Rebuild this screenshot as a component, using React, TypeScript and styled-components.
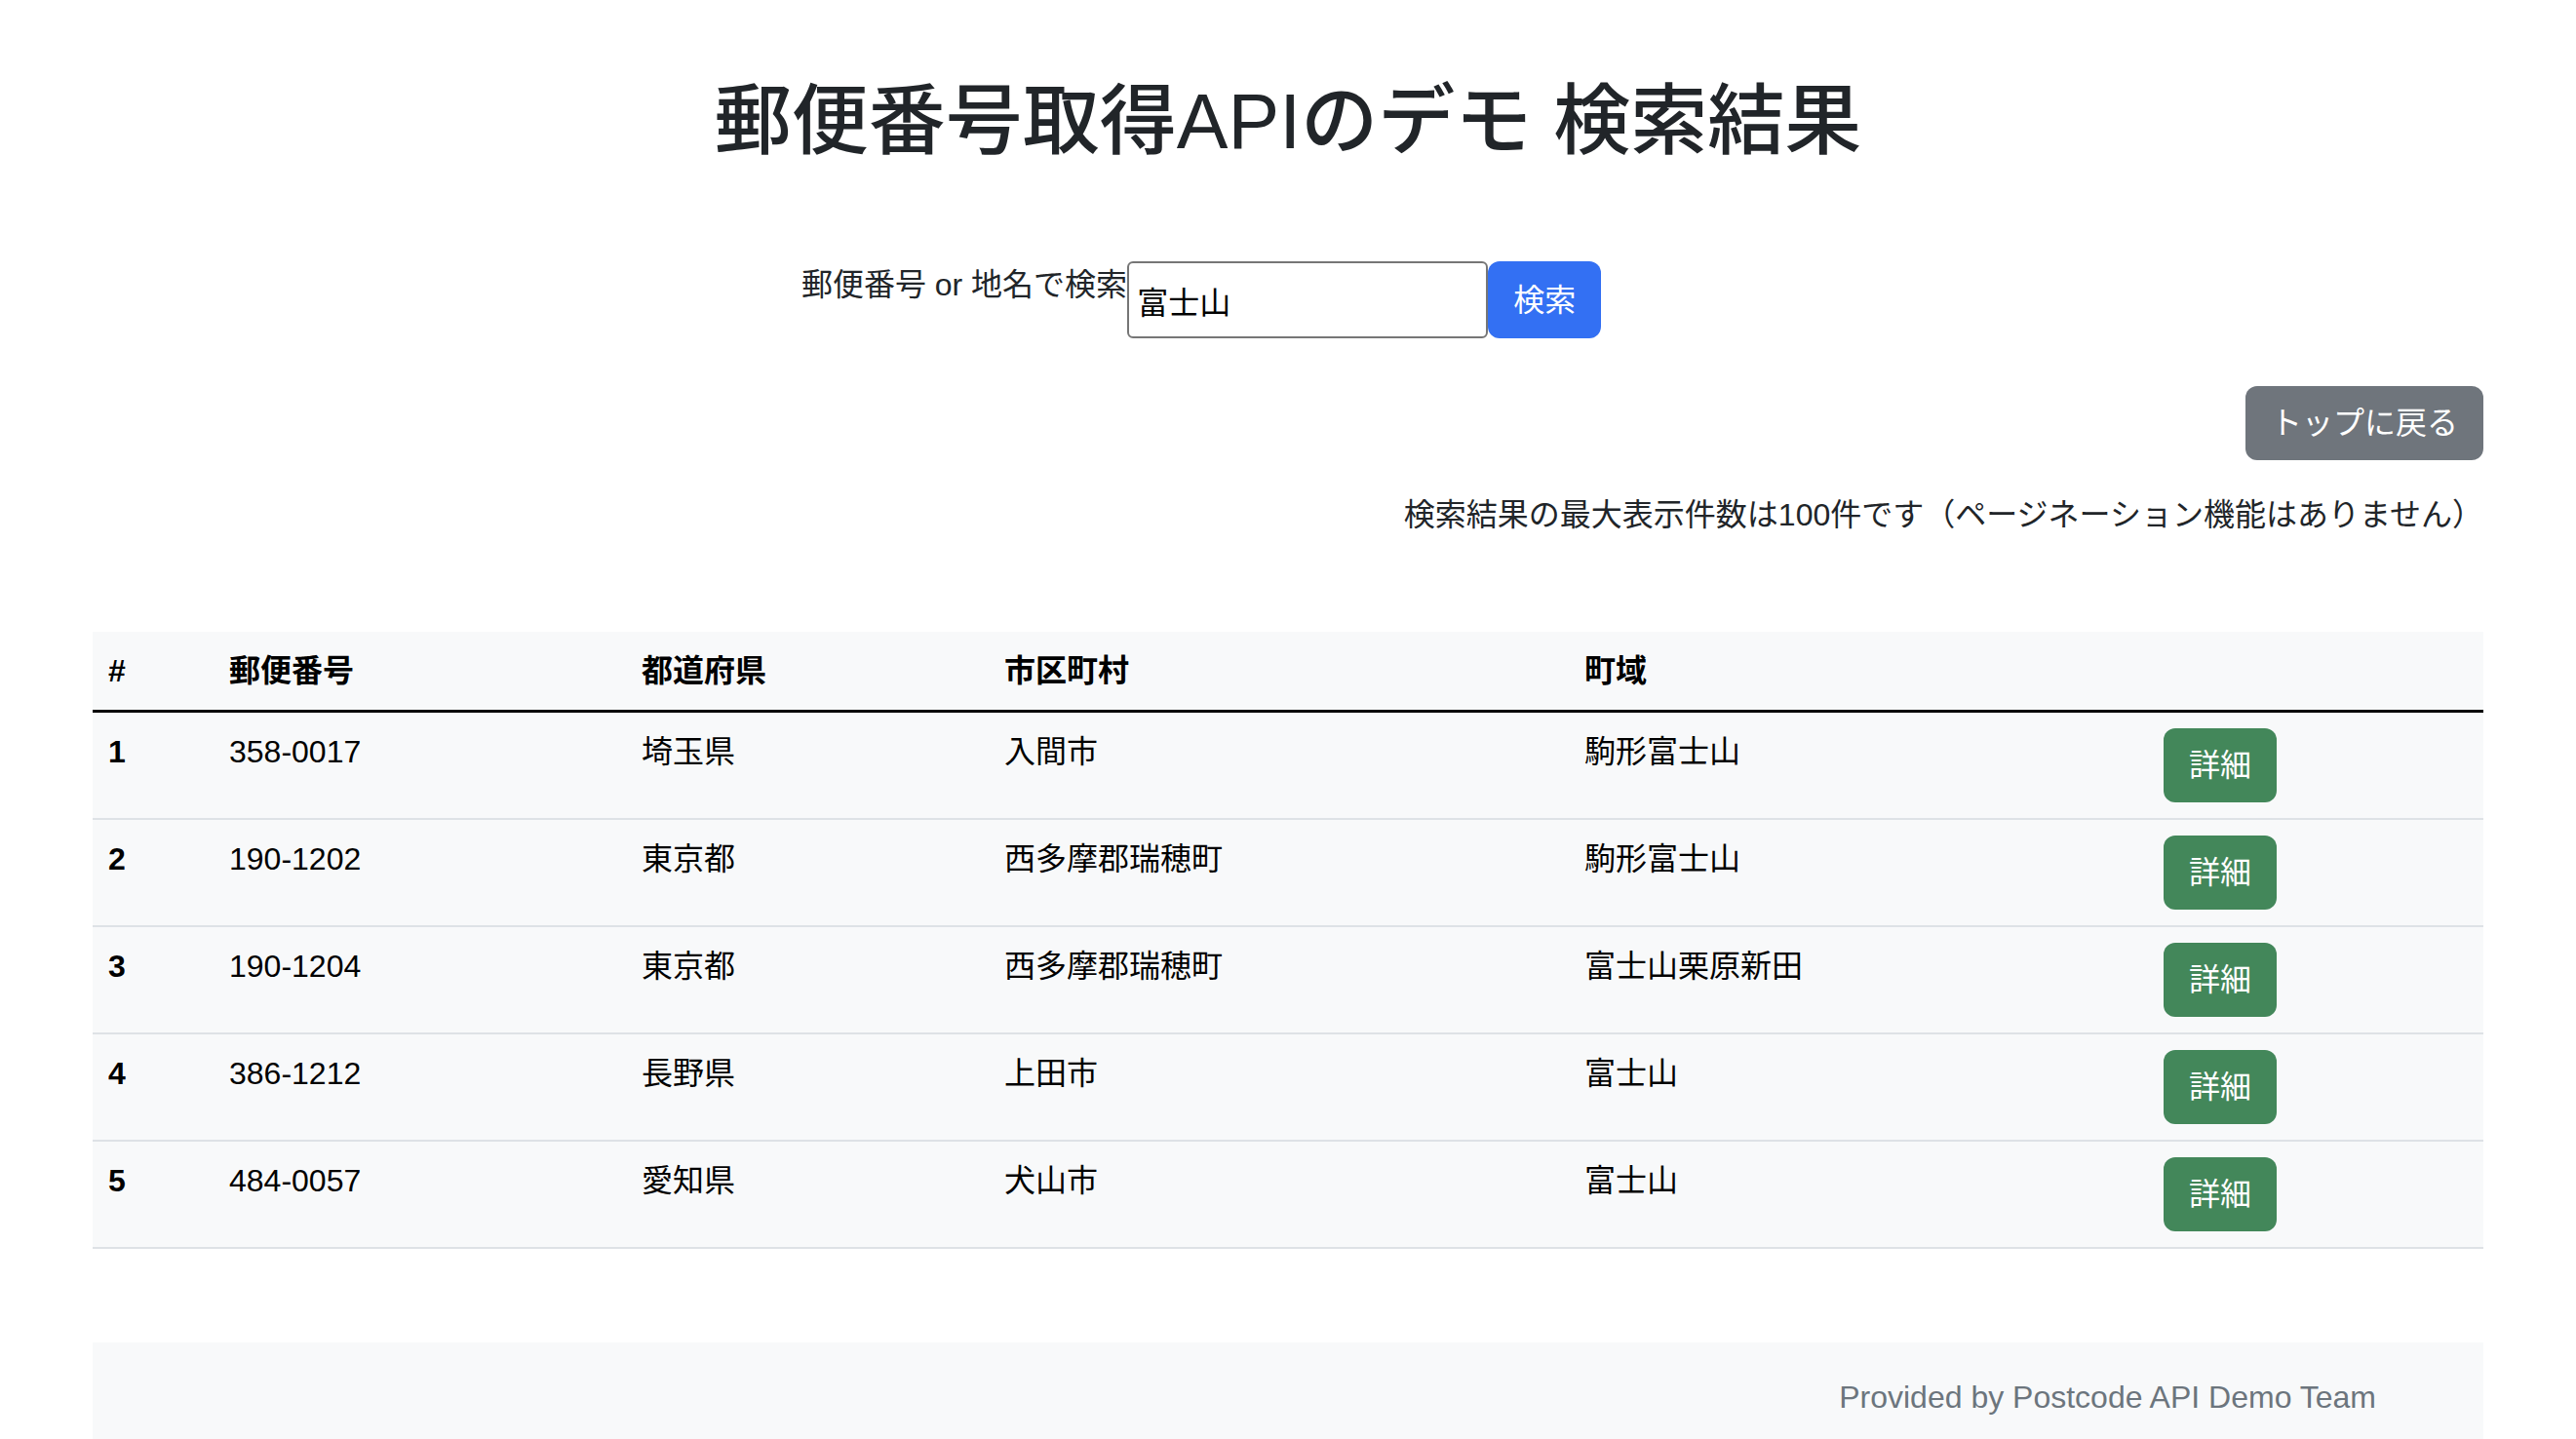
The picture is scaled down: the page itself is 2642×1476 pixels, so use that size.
import * as React from "react";
import styled, { createGlobalStyle } from "styled-components";

const GlobalStyle = createGlobalStyle`
  * { box-sizing: border-box; }
  body {
    margin: 0;
    background: #ffffff;
    color: #212529;
    font-family: "Liberation Sans", "Noto Sans CJK JP", sans-serif;
    font-size: 32px;
    line-height: 1.5;
  }
`;

const Page = styled.div`
  max-width: 2452px;
  margin: 0 auto;
  display: flex;
  flex-direction: column;
`;

const Title = styled.h1`
  margin: 77px 0 0;
  font-size: 79px;
  font-weight: 500;
  line-height: 96px;
  text-align: center;
  color: #212529;
`;

const SearchForm = styled.form`
  margin-top: 95px;
  display: flex;
  justify-content: center;
  padding-right: 178px;
`;

const SearchLabel = styled.label`
  line-height: 48px;
`;

const SearchInput = styled.input`
  width: 370px;
  height: 79px;
  border: 2px solid #767676;
  border-radius: 6px;
  padding: 0 8px;
  font: inherit;
  color: #000;
  background: #fff;
`;

const Button = styled.button<{ $tone: "primary" | "secondary" | "success" }>`
  display: inline-flex;
  align-items: center;
  justify-content: center;
  padding: 12px 24px;
  border: 2px solid transparent;
  border-radius: 12px;
  font: inherit;
  line-height: 48px;
  color: #fff;
  cursor: pointer;
  background: ${(p) =>
    p.$tone === "primary" ? "#3370f3" : p.$tone === "secondary" ? "#6f757c" : "#43875a"};
`;

const SearchButton = styled(Button)`
  padding: 0 24px;
  width: 116px;
`;

const TopRow = styled.div`
  margin-top: 49px;
  display: flex;
  justify-content: flex-end;
`;

const Notice = styled.p`
  margin: 32px 0 0;
  text-align: right;
  line-height: 48px;
`;

const Table = styled.table`
  margin-top: 96px;
  width: 100%;
  table-layout: fixed;
  border-collapse: collapse;
  background: #f8f9fa;
  color: #000;
`;

const HeadCell = styled.th`
  padding: 16px;
  text-align: left;
  font-weight: 700;
  line-height: 48px;
  vertical-align: top;
  border-bottom: 3px solid #000;
`;

const Row = styled.tr`
  border-bottom: 2px solid #dee2e6;
`;

const Cell = styled.td<{ $bold?: boolean }>`
  padding: 16px;
  line-height: 48px;
  vertical-align: top;
  font-weight: ${(p) => (p.$bold ? 700 : 400)};
`;

const Footer = styled.footer`
  margin-top: 96px;
  height: 200px;
  background: #f8f9fa;
  padding: 32px 110px 0 0;
  text-align: right;
  color: #6c757d;
  line-height: 48px;
`;

const columns = [124, 423, 372, 595, 594, 344];

const rows = [
  ["358-0017", "埼玉県", "入間市", "駒形富士山"],
  ["190-1202", "東京都", "西多摩郡瑞穂町", "駒形富士山"],
  ["190-1204", "東京都", "西多摩郡瑞穂町", "富士山栗原新田"],
  ["386-1212", "長野県", "上田市", "富士山"],
  ["484-0057", "愛知県", "犬山市", "富士山"],
];

export default function App() {
  return (
    <>
      <GlobalStyle />
      <Page>
        <Title>郵便番号取得APIのデモ 検索結果</Title>
        <SearchForm onSubmit={(e) => e.preventDefault()}>
          <SearchLabel htmlFor="q">郵便番号 or 地名で検索</SearchLabel>
          <SearchInput id="q" defaultValue="富士山" />
          <SearchButton $tone="primary" type="submit">
            検索
          </SearchButton>
        </SearchForm>
        <TopRow>
          <Button $tone="secondary" type="button">
            トップに戻る
          </Button>
        </TopRow>
        <Notice>
          検索結果の最大表示件数は100件です（ページネーション機能はありません）
        </Notice>
        <Table>
          <colgroup>
            {columns.map((w, i) => (
              <col key={i} style={{ width: w }} />
            ))}
          </colgroup>
          <thead>
            <tr>
              <HeadCell>#</HeadCell>
              <HeadCell>郵便番号</HeadCell>
              <HeadCell>都道府県</HeadCell>
              <HeadCell>市区町村</HeadCell>
              <HeadCell>町域</HeadCell>
              <HeadCell />
            </tr>
          </thead>
          <tbody>
            {rows.map((r, i) => (
              <Row key={i}>
                <Cell $bold>{i + 1}</Cell>
                {r.map((v, j) => (
                  <Cell key={j}>{v}</Cell>
                ))}
                <Cell>
                  <Button $tone="success" type="button">
                    詳細
                  </Button>
                </Cell>
              </Row>
            ))}
          </tbody>
        </Table>
        <Footer>Provided by Postcode API Demo Team</Footer>
      </Page>
    </>
  );
}
